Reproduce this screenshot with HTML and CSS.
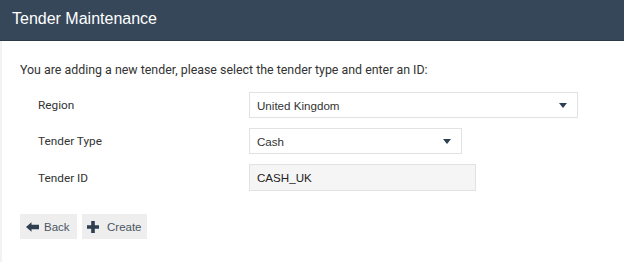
FILE: index.html
```
<!DOCTYPE html>
<html>
<head>
<meta charset="utf-8">
<link rel="stylesheet" href="styles.css">
</head>
<body>
<div class="page">
  <header class="header"><h1 class="title">Tender Maintenance</h1></header>
  <main class="content">
    <p class="intro">You are adding a new tender, please select the tender type and enter an ID:</p>
    <div class="form">
      <div class="label">Region</div>
      <div class="control select wide"><span>United Kingdom</span><span class="caret"></span></div>
      <div class="label">Tender Type</div>
      <div class="control select narrow"><span>Cash</span><span class="caret"></span></div>
      <div class="label">Tender ID</div>
      <div class="control input"><span>CASH_UK</span></div>
    </div>
    <div class="buttons">
      <button class="btn back"><svg class="icon" viewBox="0 0 13 10" width="13" height="10"><path d="M0 5 L5.5 0.3 L5.5 2.7 L13 2.7 L13 7.3 L5.5 7.3 L5.5 9.7 Z" fill="#2f3f52"/></svg>Back</button>
      <button class="btn create"><svg class="icon" viewBox="0 0 12 12" width="12" height="12"><path d="M4.2 0 H7.8 V4.2 H12 V7.8 H7.8 V12 H4.2 V7.8 H0 V4.2 H4.2 Z" fill="#2f3f52"/></svg>Create</button>
    </div>
  </main>
</div>
</body>
</html>
```
FILE: styles.css
```
html, body { margin: 0; padding: 0; background: #fff; }
body { font-family: Roboto, "Liberation Sans", Arial, sans-serif; color: #333; }
.page { width: 624px; height: 262px; box-sizing: border-box; border-left: 2px solid #f1f2f4; }
.header { height: 40px; background: #36475a; border-bottom: 1px solid #2c3a49; display: flex; align-items: center; margin-left: -2px; padding-left: 12px; }
.title { margin: 0; font-family: "Liberation Sans", Arial, sans-serif; font-weight: normal; font-size: 16px; color: #fff; position: relative; top: -1px; }
.content { padding: 0 0 0 18px; }
.intro { margin: 21px 0 0 0; font-size: 12.4px; line-height: 16px; color: #333; }
.form { display: grid; grid-template-columns: 211px auto; row-gap: 10px; margin-top: 14px; padding-left: 18px; align-items: center; justify-items: start; }
.label { font-size: 11.8px; color: #333; }
.control { box-sizing: border-box; height: 26px; display: flex; align-items: center; padding: 0 7px; font-family: "Liberation Sans", Arial, sans-serif; font-size: 11.6px; color: #333; border: 1px solid #e2e2e2; }
.select { justify-content: space-between; background: #fff; }
.wide { width: 329px; }
.narrow { width: 213px; }
.input { width: 227px; height: 27px; background: #f5f5f5; font-size: 11.6px; color: #222; }
.caret { width: 0; height: 0; border-left: 4px solid transparent; border-right: 4px solid transparent; border-top: 5px solid #2f3f52; margin-right: 3px; }
.buttons { display: flex; gap: 5px; margin-top: 23px; }
.btn { box-sizing: border-box; height: 25px; display: flex; align-items: center; background: #eeeeee; border: none; font-family: "Liberation Sans", Arial, sans-serif; font-size: 11.5px; color: #4a5563; }
.back { width: 57px; gap: 5px; padding: 0 0 0 6px; }
.create { width: 65px; gap: 8px; padding: 0 0 0 5px; }
.icon { display: block; }
```
